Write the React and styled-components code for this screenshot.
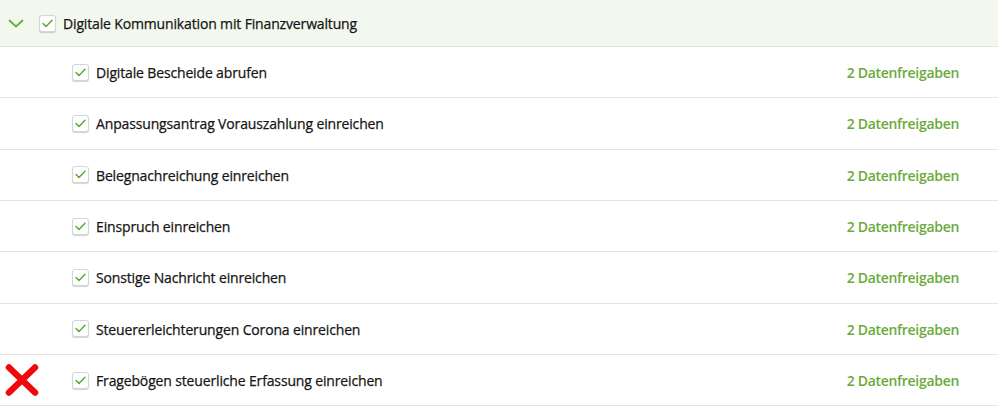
import styled, { createGlobalStyle } from 'styled-components'

const GlobalStyle = createGlobalStyle`
  html, body {
    margin: 0;
    padding: 0;
    background: #fff;
  }
  body {
    font-family: "Open Sans", "Noto Sans", sans-serif;
    color: #151515;
  }
`

const items = [
  'Digitale Bescheide abrufen',
  'Anpassungsantrag Vorauszahlung einreichen',
  'Belegnachreichung einreichen',
  'Einspruch einreichen',
  'Sonstige Nachricht einreichen',
  'Steuererleichterungen Corona einreichen',
  'Fragebögen steuerliche Erfassung einreichen',
]

const List = styled.div`
  width: 998px;
`

const Header = styled.div`
  display: flex;
  align-items: center;
  height: 46px;
  background: #f3f8ee;
  border-bottom: 1px solid #e2e6df;
  padding-left: 8px;
`

const Chevron = styled.span`
  display: flex;
  width: 16px;
  margin-right: 15px;
`

const Row = styled.div`
  display: flex;
  align-items: center;
  height: 50.33px;
  border-bottom: 1px solid #e4e4e4;
  padding-left: 72px;
  padding-right: 39px;
  position: relative;
`

const Box = styled.span`
  display: inline-flex;
  align-items: center;
  justify-content: center;
  width: 15px;
  height: 15px;
  border: 1px solid #d5d5d5;
  border-radius: 3px;
  background: #fff;
  box-shadow: 0 1px 1px rgba(0, 0, 0, 0.18);
  margin-right: 7px;
  flex-shrink: 0;
`

const Label = styled.span`
  font-size: 14px;
  letter-spacing: -0.15px;
  -webkit-text-stroke: 0.25px #151515;
  flex: 1;
  padding-top: 1px;
`

const Shares = styled.span`
  font-size: 14px;
  font-weight: 600;
  color: #6aaa3a;
  letter-spacing: -0.3px;
  padding-top: 1px;
`

const Cross = styled.svg`
  position: absolute;
  left: 5px;
  top: 50%;
  transform: translateY(-50%);
`

function Check () {
  return (
    <svg width="11" height="9" viewBox="0 0 11 9">
      <path d="M1 4.6 L4 7.6 L10 1.2" fill="none" stroke="#5aa532" strokeWidth="1.4" strokeLinecap="round" strokeLinejoin="round" />
    </svg>
  )
}

function App () {
  return (
    <>
      <GlobalStyle />
      <List>
        <Header>
          <Chevron>
            <svg width="16" height="9" viewBox="0 0 16 9">
              <path d="M1.5 1.5 L8 7.5 L14.5 1.5" fill="none" stroke="#6aaa3a" strokeWidth="1.8" strokeLinecap="round" strokeLinejoin="round" />
            </svg>
          </Chevron>
          <Box><Check /></Box>
          <Label>Digitale Kommunikation mit Finanzverwaltung</Label>
        </Header>
        {items.map((item, i) => (
          <Row key={item}>
            {i === items.length - 1 && (
              <Cross width="34" height="33" viewBox="0 0 34 33">
                <path d="M4 4 L30 29 M30 4 L4 29" stroke="#ee0a0a" strokeWidth="6.5" strokeLinecap="round" />
              </Cross>
            )}
            <Box><Check /></Box>
            <Label>{item}</Label>
            <Shares>2 Datenfreigaben</Shares>
          </Row>
        ))}
      </List>
    </>
  )
}

export default App
